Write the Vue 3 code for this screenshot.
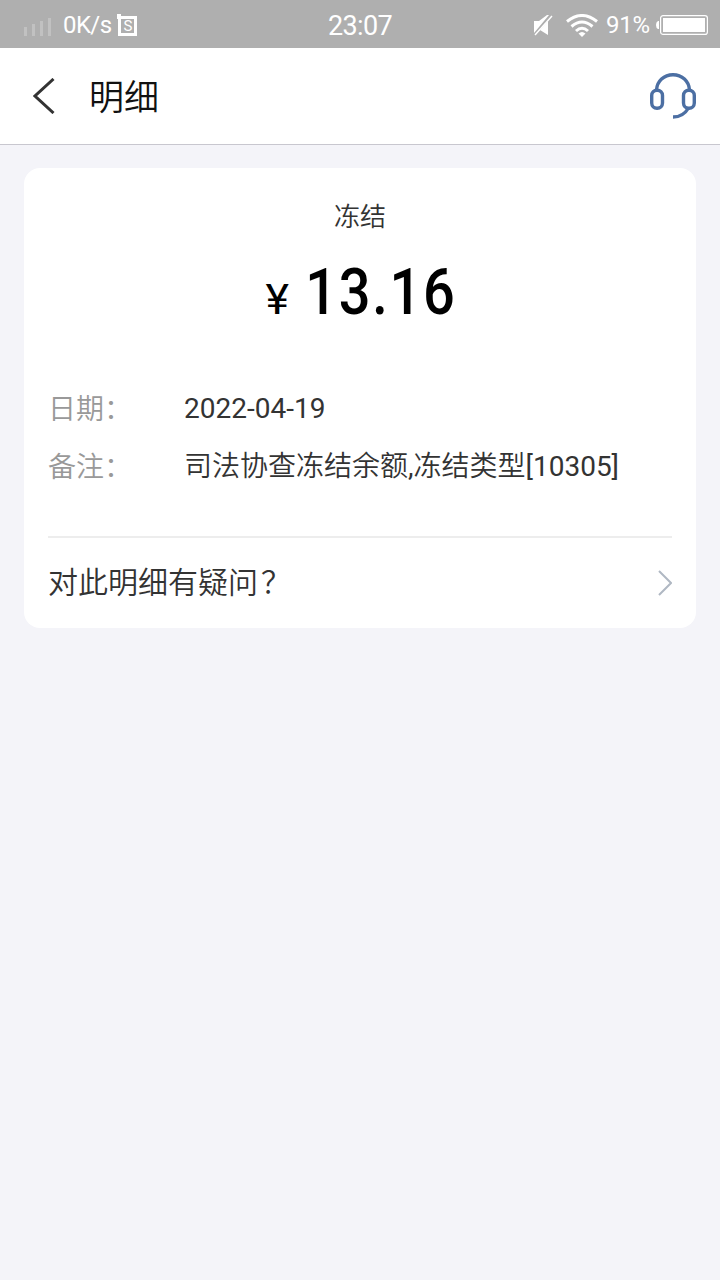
<template>
  <div class="page">
    <header class="status-bar">
      <div class="status-left">
        <svg class="signal" width="28" height="18" viewBox="0 0 28 18">
          <path d="M0 9h3v9h-3z M8 6h3v12h-3z M16 3h3v15h-3z M24 0h3v18h-3z" fill="#c1c1c1"/>
        </svg>
        <span class="speed">0K/s</span>
        <span class="app-badge">
          <svg width="20" height="22" viewBox="0 0 20 22">
            <path d="M0 0h4v2h16v20H1V5H0z M4 5v14h13V5z" fill="white" fill-rule="evenodd"/>
          </svg>
          <span class="badge-letter">S</span>
        </span>
      </div>
      <span class="clock">23:07</span>
      <div class="status-right">
        <svg class="mute" width="19" height="21" viewBox="0 0 19 21">
          <path d="M0 6h5L13 0H15L0 18z M14 6v14L6 15z" fill="white"/>
          <path d="M1 20L18 1" stroke="white" stroke-width="1.4"/>
        </svg>
        <svg class="wifi" width="32" height="23" viewBox="0 0 32 23">
          <g fill="none" stroke="white" stroke-width="3">
            <path d="M1 7.500Q16-4.500 31 7.500"/>
            <path d="M5.500 12.500Q16 3.500 26.500 12.500"/>
            <path d="M10 17Q16 11.500 22 17"/>
          </g>
          <path d="M12.500 19.500Q16 16.500 19.500 19.500L16 23z" fill="white"/>
        </svg>
        <span class="percent">91%</span>
        <svg class="battery" width="52" height="20" viewBox="0 0 52 20">
          <path d="M3 6v8H2Q0 13 0 10T2 6z" fill="white"/>
          <rect x="4.600" y="0.600" width="46.800" height="18.800" rx="2.500" fill="none" stroke="white" stroke-width="1.200"/>
          <rect x="7" y="3" width="42" height="14" fill="white"/>
        </svg>
      </div>
    </header>

    <nav class="nav-bar">
      <svg class="back" width="22" height="36" viewBox="0 0 22 36">
        <path d="M20.500 1L2 18L20.500 35" fill="none" stroke="#333" stroke-width="3"/>
      </svg>
      <h1>明细</h1>
      <svg class="service" width="46" height="46" viewBox="0 0 46 46">
        <g fill="none" stroke="#4c6fa3" stroke-width="3.400">
          <path d="M6.500 17C7 8 14 1.700 23 1.700S39 8 39.500 17"/>
          <rect x="1.700" y="17.200" width="10.800" height="18" rx="5.200"/>
          <rect x="33.500" y="17.200" width="10.800" height="18" rx="5.200"/>
          <path d="M38.500 35C35 41 30 44 23 44"/>
        </g>
      </svg>
    </nav>

    <main class="card">
      <p class="kind">冻结</p>
      <p class="amount"><span class="currency">¥</span><span class="value">{{ amount }}</span></p>
      <dl class="details">
        <div v-for="row in rows" :key="row.label" class="row">
          <dt>{{ row.label }}</dt>
          <dd>{{ row.value }}</dd>
        </div>
      </dl>
      <div class="question">
        <p>对此明细有疑问<span class="mark">？</span></p>
        <svg width="14" height="26" viewBox="0 0 14 26">
          <path d="M1 1L13 13L1 25" fill="none" stroke="#b0b8c3" stroke-width="2"/>
        </svg>
      </div>
    </main>
  </div>
</template>

<script setup>
import { ref } from 'vue'

const amount = ref('13.16')

const rows = ref([
  { label: '日期：', value: '2022-04-19' },
  { label: '备注：', value: '司法协查冻结余额,冻结类型[10305]' }
])
</script>

<style>
body {
  margin: 0;
  background: #f4f4f9;
}
</style>

<style scoped>
.page {
  min-height: 1280px;
  background: #f4f4f9;
  font-family: Roboto, "Noto Sans CJK SC DemiLight", "Noto Sans CJK SC", sans-serif;
  color: #333;
}

.status-bar {
  display: grid;
  grid-template-columns: 1fr auto 1fr;
  align-items: center;
  height: 48px;
  padding: 0 12px 0 24px;
  box-sizing: border-box;
  background: #afafaf;
  color: white;
}

.status-left,
.status-right {
  display: flex;
  align-items: center;
}

.status-right {
  justify-content: flex-end;
}

.signal {
  margin-top: 4px;
}

.speed {
  margin-left: 11px;
  font-size: 24px;
  line-height: 48px;
  letter-spacing: -0.6px;
}

.app-badge {
  position: relative;
  display: flex;
  margin-left: 6px;
}

.badge-letter {
  position: absolute;
  left: 6px;
  top: 4px;
  font-size: 15px;
  line-height: 17px;
}

.clock {
  margin-right: 12px;
  padding-top: 2px;
  font-size: 27px;
  line-height: 48px;
  letter-spacing: -0.6px;
}

.mute {
  margin-right: 13px;
}

.wifi {
  margin-right: 8px;
}

.percent {
  margin-right: 6px;
  font-size: 24px;
  line-height: 48px;
  letter-spacing: -0.2px;
}

.nav-bar {
  display: flex;
  align-items: center;
  height: 97px;
  padding: 0 24px 0 33px;
  box-sizing: border-box;
  background: white;
  border-bottom: 1px solid #c8c7cf;
}

.nav-bar h1 {
  flex: 1;
  margin: 0 0 0 34px;
  padding-top: 5px;
  font-size: 35px;
  font-weight: 400;
  line-height: 48px;
  color: #111;
}

.card {
  margin: 23px 24px 0;
  height: 460px;
  padding: 0 24px;
  box-sizing: border-box;
  background: white;
  border-radius: 16px;
}

.kind {
  margin: 0;
  padding-top: 30px;
  font-size: 26px;
  font-weight: 300;
  line-height: 38px;
  text-align: center;
}

.amount {
  display: flex;
  justify-content: center;
  align-items: baseline;
  margin: 0;
  padding: 18px 0 0 15px;
  line-height: 76px;
  color: black;
}

.currency {
  display: inline-block;
  margin-right: 4px;
  font-size: 43px;
  font-weight: 400;
  transform: scaleX(1.04);
}

/* narrowed to get the DIN-like proportions of the figures */
.value {
  display: inline-block;
  font-size: 65px;
  font-weight: 500;
  letter-spacing: 2px;
  transform: scaleX(0.86);
}

.details {
  margin: 43px 0 0;
  height: 156px;
  border-bottom: 2px solid #ededed;
}

.row {
  display: flex;
  height: 58px;
  font-size: 28px;
  line-height: 58px;
}

.row dt {
  width: 136px;
  padding-top: 1px;
  color: #999;
}

.row dd {
  margin: 0;
  white-space: nowrap;
}

.question {
  display: flex;
  justify-content: space-between;
  align-items: center;
  height: 90px;
  font-size: 30px;
}

.question p {
  margin: 0;
  padding-bottom: 6px;
}

.mark {
  margin-left: 3px;
}
</style>
